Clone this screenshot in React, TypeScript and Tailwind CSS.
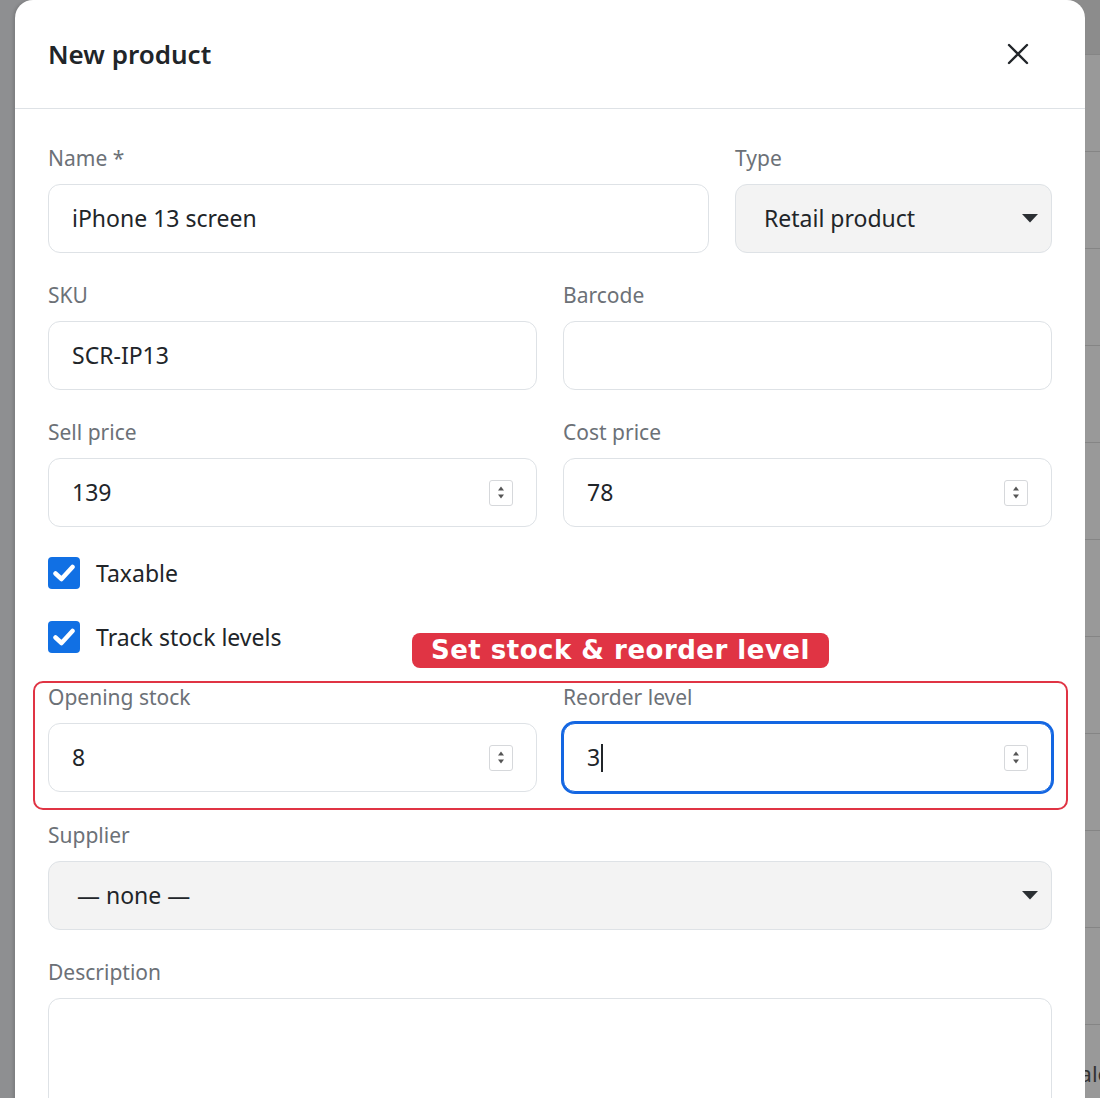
import React from "react"

const font = { fontFamily: '"Noto Sans", "Open Sans", sans-serif' }

const Label = ({ children }: { children: React.ReactNode }) => (
  <div className="h-[28px] leading-[28px] text-[21px] text-[#6c7177] mb-[12px]">{children}</div>
)

const Spinner = () => (
  <div className="flex h-[26px] w-[24px] flex-col items-center justify-center gap-[3px] rounded-[3px] border border-[#d6d8db] bg-white">
    <svg width="8" height="5" viewBox="0 0 8 5">
      <path d="M4 0.5 L7 4.5 L1 4.5 Z" fill="#555" />
    </svg>
    <svg width="8" height="5" viewBox="0 0 8 5">
      <path d="M1 0.5 L7 0.5 L4 4.5 Z" fill="#555" />
    </svg>
  </div>
)

const Caret = () => (
  <svg width="16" height="9" viewBox="0 0 16 9">
    <path d="M0 0 H16 L8 8.5 Z" fill="#2b2f33" />
  </svg>
)

const Input = ({ value, number, focus }: { value?: string; number?: boolean; focus?: boolean }) => (
  <div
    className={`flex h-[69px] items-center justify-between rounded-[12px] border bg-white pl-[23px] pr-[23px] text-[23px] text-[#212529] ${
      focus ? "border-[#1366e2] shadow-[0_0_0_2px_#1366e2]" : "border-[#dee2e6]"
    }`}
  >
    <span className="flex items-center">
      {value}
      {focus && <span className="ml-[1px] inline-block h-[28px] w-[2px] bg-[#212529]" />}
    </span>
    {number && <Spinner />}
  </div>
)

const Select = ({ value }: { value: string }) => (
  <div className="flex h-[69px] items-center justify-between rounded-[12px] border border-[#dee2e6] bg-[#f3f3f3] pl-[28px] pr-[13px] text-[23px] text-[#212529]">
    <span>{value}</span>
    <Caret />
  </div>
)

const Check = ({ label }: { label: string }) => (
  <div className="flex h-[32px] items-center gap-[16px]">
    <div className="flex h-[32px] w-[32px] items-center justify-center rounded-[4px] bg-[#1170e4]">
      <svg width="22" height="18" viewBox="0 0 22 18">
        <path d="M2.5 9.5 L8.5 15 L19.5 3" fill="none" stroke="white" strokeWidth="4.5" strokeLinecap="round" strokeLinejoin="round" />
      </svg>
    </div>
    <span className="text-[23px] text-[#212529]">{label}</span>
  </div>
)

export default function App() {
  return (
    <div className="relative h-[1098px] w-full overflow-hidden bg-[#8e8f91]" style={font}>
      {/* page behind the dialog */}
      <div className="flex h-full">
        <div className="w-[200px] flex-none bg-[#8e8f91]" />
        <div className="flex flex-1 flex-col bg-[#999999]">
          <div className="h-[55px] flex-none border-b border-[#858585] bg-[#8c8c8c]" />
          {Array.from({ length: 11 }).map((_, i) => (
            <div key={i} className="flex h-[97px] flex-none items-center justify-end border-b border-[#858585]">
              {i === 10 && <span className="mr-[-10px] text-[22px] text-[#333]">Sale</span>}
            </div>
          ))}
        </div>
      </div>

      {/* dialog */}
      <div className="absolute left-[15px] top-0 w-[1070px] h-[1120px] rounded-t-[18px] bg-white shadow-[-2px_0_3px_rgba(0,0,0,0.12)]">
        <div className="flex h-[109px] items-center justify-between border-b border-[#dee2e6] pl-[33px] pr-[56px]">
          <h2 className="text-[26px] font-semibold text-[#212529]">New product</h2>
          <svg width="22" height="22" viewBox="0 0 22 22">
            <path d="M2 2 L20 20 M20 2 L2 20" stroke="#212529" strokeWidth="2.4" strokeLinecap="round" />
          </svg>
        </div>

        <div className="px-[33px] pt-[35px]">
          <div className="grid grid-cols-[661px_1fr] gap-x-[26px]">
            <div>
              <Label>Name *</Label>
              <Input value="iPhone 13 screen" />
            </div>
            <div>
              <Label>Type</Label>
              <Select value="Retail product" />
            </div>
          </div>

          <div className="mt-[28px] grid grid-cols-2 gap-x-[26px]">
            <div>
              <Label>SKU</Label>
              <Input value="SCR-IP13" />
            </div>
            <div>
              <Label>Barcode</Label>
              <Input />
            </div>
          </div>

          <div className="mt-[28px] grid grid-cols-2 gap-x-[26px]">
            <div>
              <Label>Sell price</Label>
              <Input value="139" number />
            </div>
            <div>
              <Label>Cost price</Label>
              <Input value="78" number />
            </div>
          </div>

          <div className="mt-[30px] flex flex-col gap-[32px]">
            <Check label="Taxable" />
            <Check label="Track stock levels" />
          </div>

          <div className="relative mt-[30px] grid grid-cols-2 gap-x-[26px]">
            <div className="pointer-events-none absolute -left-[15px] -right-[16px] -top-[2px] -bottom-[18px] rounded-[10px] border-2 border-[#e03444]" />
            <div
              className="absolute left-[364px] -top-[50px] rounded-[8px] bg-[#e03444] px-[19px] h-[35px] leading-[35px] text-[26px] font-bold tracking-[0.5px] text-white"
              style={{ fontFamily: '"DejaVu Sans", sans-serif' }}
            >
              Set stock &amp; reorder level
            </div>
            <div>
              <Label>Opening stock</Label>
              <Input value="8" number />
            </div>
            <div>
              <Label>Reorder level</Label>
              <Input value="3" number focus />
            </div>
          </div>

          <div className="mt-[29px]">
            <Label>Supplier</Label>
            <Select value="— none —" />
          </div>

          <div className="mt-[28px]">
            <Label>Description</Label>
            <div className="h-[160px] rounded-[12px] border border-[#dee2e6] bg-white" />
          </div>
        </div>
      </div>
    </div>
  )
}
